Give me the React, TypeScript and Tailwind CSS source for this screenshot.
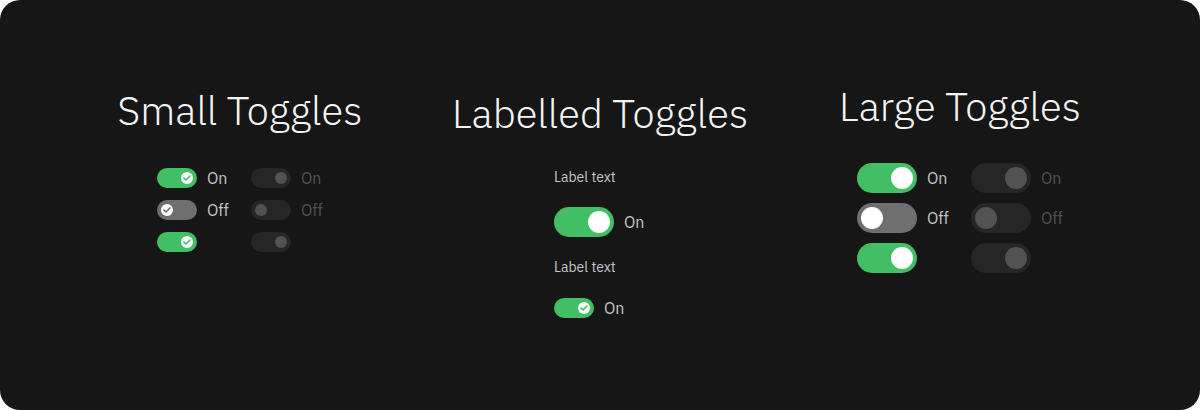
import React from "react";

const font = { fontFamily: "'IBM Plex Sans', Inter, 'Noto Sans', sans-serif" };

const Check = ({ color }: { color: string }) => (
  <svg width="8" height="6" viewBox="0 0 8 6" fill="none">
    <path d="M1 3.1L3 5L7 1" stroke={color} strokeWidth="1.6" strokeLinecap="round" strokeLinejoin="round" />
  </svg>
);

// small toggle: 40x20, knob 12
const SmallToggle = ({ on, disabled }: { on: boolean; disabled?: boolean }) => {
  const track = disabled ? "bg-[#262626]" : on ? "bg-[#42be65]" : "bg-[#6f6f6f]";
  const knob = disabled ? "bg-[#525252]" : "bg-white";
  return (
    <div className={`flex h-5 w-10 shrink-0 items-center rounded-full px-1 ${track} ${on ? "justify-end" : "justify-start"}`}>
      <div className={`flex h-3 w-3 items-center justify-center rounded-full ${knob}`}>
        {!disabled && <Check color={on ? "#42be65" : "#6f6f6f"} />}
      </div>
    </div>
  );
};

// large toggle: 60x30, knob 22
const LargeToggle = ({ on, disabled }: { on: boolean; disabled?: boolean }) => {
  const track = disabled ? "bg-[#262626]" : on ? "bg-[#42be65]" : "bg-[#6f6f6f]";
  const knob = disabled ? "bg-[#525252]" : "bg-white";
  return (
    <div className={`flex h-[30px] w-[60px] shrink-0 items-center rounded-full px-1 ${track} ${on ? "justify-end" : "justify-start"}`}>
      <div className={`h-[22px] w-[22px] rounded-full ${knob}`} />
    </div>
  );
};

const Text = ({ children, disabled }: { children?: React.ReactNode; disabled?: boolean }) => (
  <span className={`text-[16px] leading-6 ${disabled ? "text-[#525252]" : "text-[#c6c6c6]"}`}>{children}</span>
);

const rows: { on: boolean; label: string }[] = [
  { on: true, label: "On" },
  { on: false, label: "Off" },
  { on: true, label: "" },
];

export default function App() {
  return (
    <div className="bg-white">
      <div className="grid h-[410px] w-[1200px] grid-cols-3 rounded-[20px] bg-[#161616] px-[60px]" style={font}>
        {/* ===== SMALL ===== */}
        <div className="flex flex-col items-center pt-[86px]">
          <h2 className="text-[40px] font-light leading-[48px] text-[#f4f4f4]">Small Toggles</h2>
          <div className="mt-[32px] flex flex-col gap-2 pl-[2px]">
            {rows.map((r, i) => (
              <div key={i} className="flex h-6 items-center">
                <div className="flex w-[94px] items-center gap-[10px]">
                  <SmallToggle on={r.on} />
                  <Text>{r.label}</Text>
                </div>
                <div className="flex w-[74px] items-center gap-[10px]">
                  <SmallToggle on={r.on} disabled />
                  <Text disabled>{r.label}</Text>
                </div>
              </div>
            ))}
          </div>
        </div>

        {/* ===== LABELLED ===== */}
        <div className="flex flex-col items-center pt-[89px]">
          <h2 className="text-[40px] font-light leading-[48px] text-[#f4f4f4]">Labelled Toggles</h2>
          <div className="mt-[31px] flex w-[92px] flex-col">
            <span className="text-[14px] leading-[18px] text-[#c6c6c6]">Label text</span>
            <div className="mt-[21px] flex items-center gap-[10px]">
              <LargeToggle on />
              <Text>On</Text>
            </div>
            <span className="mt-[21px] text-[14px] leading-[18px] text-[#c6c6c6]">Label text</span>
            <div className="mt-[20px] flex items-center gap-[10px]">
              <SmallToggle on />
              <Text>On</Text>
            </div>
          </div>
        </div>

        {/* ===== LARGE ===== */}
        <div className="flex flex-col items-center pt-[82px]">
          <h2 className="text-[40px] font-light leading-[48px] text-[#f4f4f4]">Large Toggles</h2>
          <div className="mt-[33px] flex flex-col gap-[10px]">
            {rows.map((r, i) => (
              <div key={i} className="flex h-[30px] items-center">
                <div className="flex w-[114px] items-center gap-[10px]">
                  <LargeToggle on={r.on} />
                  <Text>{r.label}</Text>
                </div>
                <div className="flex w-[92px] items-center gap-[10px]">
                  <LargeToggle on={r.on} disabled />
                  <Text disabled>{r.label}</Text>
                </div>
              </div>
            ))}
          </div>
        </div>
      </div>
    </div>
  );
}
